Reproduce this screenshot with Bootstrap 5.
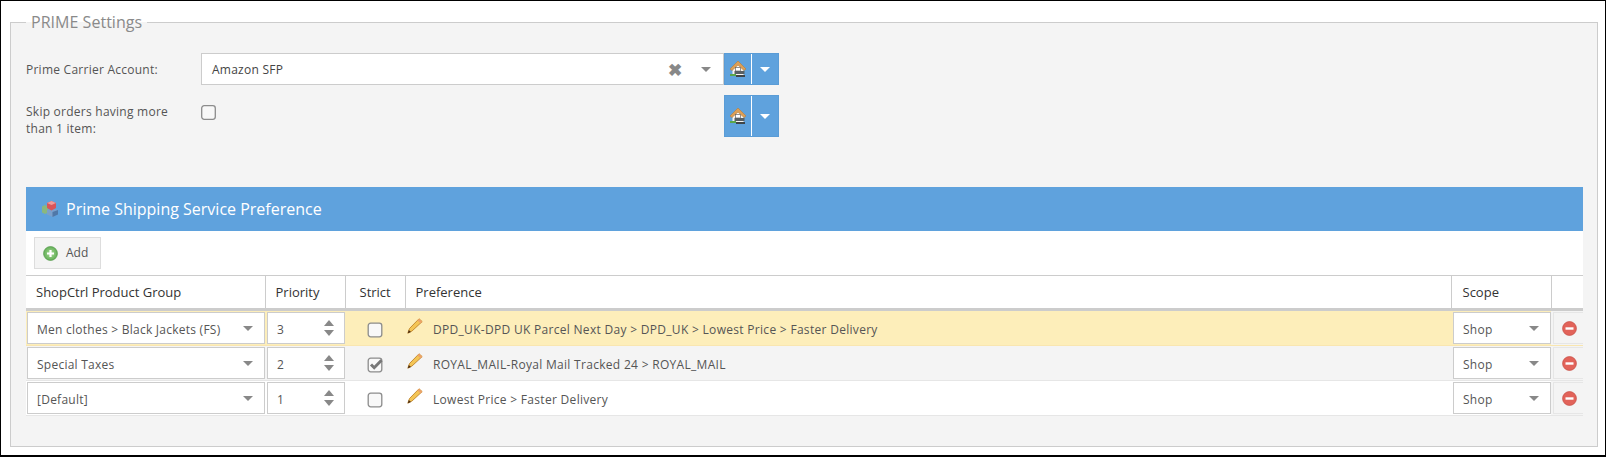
<!DOCTYPE html>
<html lang="en">
  <head>
    <meta charset="UTF-8" />
    <meta name="viewport" content="width=device-width, initial-scale=1" />
    <title>PRIME Settings</title>
    <link href="https://cdn.jsdelivr.net/npm/bootstrap@5.3.0/dist/css/bootstrap.min.css" rel="stylesheet" />
    <style>
      html, body { height: 457px; overflow: hidden; }
      body {
        background: #fff;
        font-family: "Open Sans", "Liberation Sans", sans-serif;
        font-size: 12px;
        letter-spacing: .25px;
        color: #555;
      }
      .frame { border: 1px solid #000; border-bottom-width: 2px; height: 457px; padding: 9px 7px 8px 9px; }
      .prime-box { border: 1px solid #ccc; background: #f4f4f4; height: 100%; margin: 0; padding: 0 14px 0 15px; min-width: 0; }
      .prime-box legend { float: none; width: auto; margin: 0; padding: 0 5px; font-size: 16px; line-height: 24px; color: #8a8a8a; letter-spacing: .03px; }
      .form-line { display: flex; align-items: flex-start; }
      .line-one { margin-top: 19px; height: 32px; }
      .line-two { margin-top: 10px; height: 42px; }
      .field-label { width: 175px; line-height: 17px; flex: none; padding-top: 8px; }
      .combo { width: 523px; height: 32px; background: #fff; border: 1px solid #ccc; display: flex; align-items: center; padding: 0 12px 0 10px; color: #444; }
      .combo-text { padding-top: 1px; }
      .combo-spacer { width: 523px; padding-top: 10px; }
      .check-mark { width: 15px; height: 15px; display: block; }
      .tri { width: 0; height: 0; border-left: 5px solid transparent; border-right: 5px solid transparent; border-top: 5px solid #888; }
      .clear-x { color: #888; font-size: 17px; font-weight: 700; line-height: 1; margin-right: 19px; }
      .split-btn { width: 55px; background: #5fa2dd; border: 1px solid #5a9cd6; display: flex; flex: none; align-self: stretch; }
      .split-main { width: 27px; display: flex; align-items: center; justify-content: center; border-right: 1px solid #fff; }
      .split-arrow { flex: 1; display: flex; align-items: center; justify-content: center; }
      .split-arrow .tri { border-top-color: #fff; }
      .grid-panel { margin-top: 50px; background: #fff; }
      .grid-title { background: #5fa2dd; color: #fff; height: 44px; font-size: 16px; padding-left: 16px; gap: 7px; letter-spacing: 0; }
      .grid-tools { height: 44px; padding: 6px 0 0 8px; }
      .add-btn { height: 32px; width: 67px; background: #f4f4f4; border: 1px solid #ddd; color: #555; font-size: 12px; gap: 8px; padding: 0 0 0 8px; border-radius: 0; }
      .pref-grid { table-layout: fixed; width: 100%; margin: 0; border-collapse: collapse; --bs-table-bg: transparent; color: #555; }
      .pref-grid th, .pref-grid td { padding: 0; vertical-align: middle; color: #555; font-size: 12px; }
      .pref-grid thead th { height: 34px; font-weight: 400; font-size: 13px; letter-spacing: 0; color: #333; padding: 1px 0 0 10px; border-top: 1px solid #ccc; border-right: 1px solid #ccc; border-bottom: 3px solid #ccc; }
      .pref-grid thead th:last-child { border-right: 0; }
      .pref-grid thead .strict-head { padding-left: 14px; }
      .pref-grid thead .scope-head { padding-left: 11px; }
      .pref-grid tbody td { height: 35px; border: 0; border-bottom: 1px solid #e6e6e6; padding: 1px 0 1px 1px; }
      .row-warm td { background: #fdeeba; border-bottom-color: #f9e6b0 !important; }
      .row-grey td { background: #f4f4f4; }
      .row-plain td { background: #fff; }
      .cell-box { height: 32px; background: #fff; border: 1px solid #ccc; display: flex; align-items: center; justify-content: space-between; padding: 0 11px 0 9px; }
      .cell-text { padding-top: 4px; }
      .pref-grid tbody .inset-cell { padding-left: 2px; }
      .spin { display: flex; flex-direction: column; gap: 4px; margin-right: -1px; margin-top: -1px; }
      .spin i { display: block; width: 0; height: 0; border-left: 5px solid transparent; border-right: 5px solid transparent; }
      .spin i:first-child { border-bottom: 6px solid #888; }
      .spin i:last-child { border-top: 6px solid #888; }
      .pref-grid tbody .strict-cell { padding-left: 22px; }
      .pref-text { display: flex; align-items: center; gap: 10px; }
      .pref-text svg { margin-top: -5px; margin-left: 1px; flex: none; }
      .pref-text span { padding-top: 4px; letter-spacing: .3px; }
      .strict-cell svg { margin-top: 3px; display: block; }
      .pref-grid tbody .remove-cell { background: #f4f4f4; }
      .remove-box { height: 32px; background: #f4f4f4; border: 1px solid #e6e6e6; border-right: 0; display: flex; align-items: center; padding-left: 8px; margin-left: 1px; }
    </style>
  </head>
  <body>
    <div class="frame">
      <fieldset class="prime-box">
        <legend>PRIME Settings</legend>

        <div class="form-line line-one">
          <div class="field-label">Prime Carrier Account:</div>
          <div class="combo">
            <span class="combo-text flex-grow-1">Amazon SFP</span>
            <span class="clear-x">✖</span>
            <span class="tri"></span>
          </div>
          <div class="split-btn">
            <div class="split-main">
              <svg width="18" height="18" viewBox="0 0 18 18"><path d="M3.500 9V16H14.500V9L9 4.500Z" fill="#f7f3ee"/><path d="M1 9 9 1 17 9 15 10.500 9 5 3 10.500Z" fill="#dc9f57" stroke="#b97d38" stroke-width=".6"/><rect x="6.500" y="7.500" width="5" height="3.500" fill="#fff" stroke="#666" stroke-width=".7"/><rect x="5.500" y="11" width="10" height="3" fill="#586064"/><rect x="1" y="14" width="6" height="2" fill="#5aa64a"/><rect x="7" y="15" width="9" height="2" fill="#3f4548"/></svg>
            </div>
            <div class="split-arrow"><span class="tri"></span></div>
          </div>
        </div>

        <div class="form-line line-two">
          <div class="field-label">Skip orders having more<br />than 1 item:</div>
          <div class="combo-spacer">
            <svg class="check-mark" viewBox="0 0 15 15"><rect x=".7" y=".7" width="13.600" height="13.600" rx="2.500" fill="#f8f8f8" stroke="#8c8c8c" stroke-width="1.300"/></svg>
          </div>
          <div class="split-btn">
            <div class="split-main">
              <svg width="18" height="18" viewBox="0 0 18 18"><path d="M3.500 9V16H14.500V9L9 4.500Z" fill="#f7f3ee"/><path d="M1 9 9 1 17 9 15 10.500 9 5 3 10.500Z" fill="#dc9f57" stroke="#b97d38" stroke-width=".6"/><rect x="6.500" y="7.500" width="5" height="3.500" fill="#fff" stroke="#666" stroke-width=".7"/><rect x="5.500" y="11" width="10" height="3" fill="#586064"/><rect x="1" y="14" width="6" height="2" fill="#5aa64a"/><rect x="7" y="15" width="9" height="2" fill="#3f4548"/></svg>
            </div>
            <div class="split-arrow"><span class="tri"></span></div>
          </div>
        </div>

        <div class="grid-panel">
          <div class="grid-title d-flex align-items-center">
            <svg width="17" height="16" viewBox="0 0 17 16"><path d="M0 5.500 3 4 6 5.500V11.500L3 13 0 11.500Z" fill="#8ab87e"/><path d="M5 9 10.500 7 16 9V13.500L10.500 16 5 13.500Z" fill="#7aa0cc"/><path d="M10.500 11V16L16 13.500V9Z" fill="#4f78a8"/><path d="M5 2 9.500 0 14 2V7L9.500 9.500 5 7Z" fill="#d9545a"/><path d="M5 2 9.500 4 14 2 9.500 0Z" fill="#ef9a9a"/></svg>
            <span>Prime Shipping Service Preference</span>
          </div>
          <div class="grid-tools">
            <button type="button" class="btn add-btn d-flex align-items-center">
              <svg width="15" height="15" viewBox="0 0 15 15"><defs><radialGradient id="addFill" cx=".5" cy=".5" r=".55"><stop offset="0" stop-color="#a8dc96"/><stop offset="1" stop-color="#5dab52"/></radialGradient></defs><circle cx="7.500" cy="7.500" r="6.900" fill="url(#addFill)" stroke="#5a9e50" stroke-width=".8"/><path d="M7.500 4v7M4 7.500h7" stroke="#fff" stroke-width="2.200"/></svg>
              Add
            </button>
          </div>
          <table class="table pref-grid">
            <colgroup>
              <col style="width: 239px" /><col style="width: 80px" /><col style="width: 60px" /><col /><col style="width: 100px" /><col style="width: 32px" />
            </colgroup>
            <thead>
              <tr><th>ShopCtrl Product Group</th><th>Priority</th><th class="strict-head">Strict</th><th>Preference</th><th class="scope-head">Scope</th><th></th></tr>
            </thead>
            <tbody id="prefRows"></tbody>
          </table>
        </div>
      </fieldset>
    </div>
    <script>
      const rows = [
        { cls: "row-warm", group: "Men clothes &gt; Black Jackets (FS)", prio: 3, strict: false, pref: "DPD_UK-DPD UK Parcel Next Day &gt; DPD_UK &gt; Lowest Price &gt; Faster Delivery" },
        { cls: "row-grey", group: "Special Taxes", prio: 2, strict: true, pref: "ROYAL_MAIL-Royal Mail Tracked 24 &gt; ROYAL_MAIL" },
        { cls: "row-plain", group: "[Default]", prio: 1, strict: false, pref: "Lowest Price &gt; Faster Delivery" },
      ];
      const pencil = `<svg width="16" height="16" viewBox="0 0 16 16"><path d="M12 .8 15.200 3.600 5 13 .8 15.200 2.500 10.500Z" fill="#f4c555" stroke="#b97a1e" stroke-width=".8"/><path d="M12 .8 15.200 3.600 13.600 5.200 10.400 2.400Z" fill="#eda36a"/><path d="M.8 15.200 1.800 12 4 14Z" fill="#4a2c12"/></svg>`;
      const box = (on) => `<svg width="16" height="17" viewBox="0 0 16 17"><rect x="1.200" y="2.200" width="13.600" height="13.600" rx="2.500" fill="#f8f8f8" stroke="#8c8c8c" stroke-width="1.300"/>${on ? '<path d="M4 8.500l3.200 3.200 7.300-7.500" fill="none" stroke="#777" stroke-width="3"/>' : ""}</svg>`;
      const minus = `<svg width="15" height="15" viewBox="0 0 15 15"><circle cx="7.500" cy="7.500" r="6.900" fill="#e2635a" stroke="#c9534a" stroke-width=".8"/><rect x="3.500" y="6.300" width="8" height="2.400" fill="#fff"/></svg>`;
      document.getElementById("prefRows").innerHTML = rows
        .map(
          (r) => `
            <tr class="${r.cls}">
              <td><div class="cell-box"><span class="cell-text">${r.group}</span><span class="tri"></span></div></td>
              <td class="inset-cell"><div class="cell-box"><span class="cell-text">${r.prio}</span><span class="spin"><i></i><i></i></span></div></td>
              <td class="strict-cell">${box(r.strict)}</td>
              <td><div class="pref-text">${pencil}<span>${r.pref}</span></div></td>
              <td class="inset-cell"><div class="cell-box"><span class="cell-text">Shop</span><span class="tri"></span></div></td>
              <td class="remove-cell"><div class="remove-box">${minus}</div></td>
            </tr>
          `
        )
        .join("");
    </script>
    <script src="https://cdn.jsdelivr.net/npm/bootstrap@5.3.0/dist/js/bootstrap.bundle.min.js"></script>
  </body>
</html>
